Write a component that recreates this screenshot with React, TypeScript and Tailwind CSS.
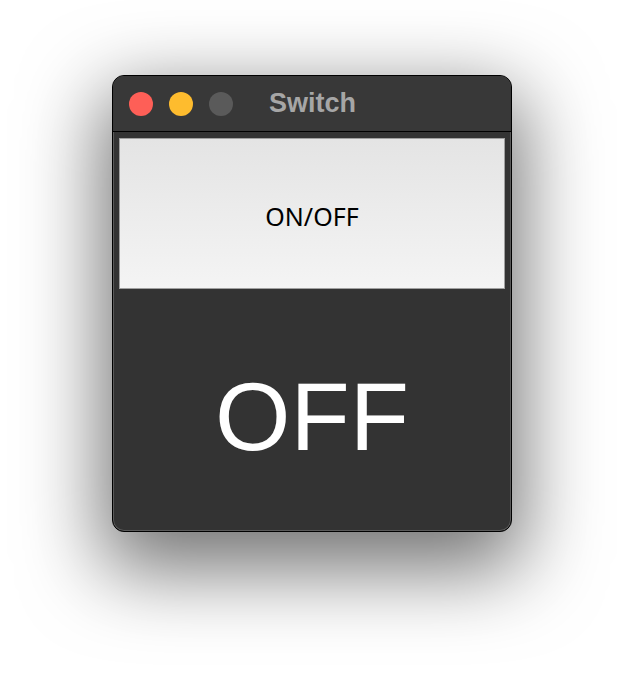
export default function App() {
  return (
    <div className="w-[624px] h-[680px] bg-white pt-[75px] pl-[112px] font-['Liberation_Sans',Arial,sans-serif]">
      {/* window */}
      <div className="w-[400px] h-[457px] rounded-[12px] border border-black bg-[#333333] shadow-[0_28px_80px_10px_rgba(0,0,0,0.55)] ring-1 ring-inset ring-[#5a5a5a] flex flex-col overflow-hidden">
        {/* title bar */}
        <div className="h-[56px] shrink-0 bg-[#383838] border-b border-black flex items-center relative">
          <div className="flex items-center gap-[16px] pl-[16px]">
            <span className="w-[24px] h-[24px] rounded-full bg-[#fe5f57]" />
            <span className="w-[24px] h-[24px] rounded-full bg-[#febc2e]" />
            <span className="w-[24px] h-[24px] rounded-full bg-[#5a5a5a]" />
          </div>
          <span className="ml-[36px] text-[27px] font-bold text-[#a6a6a6] leading-none">Switch</span>
        </div>
        {/* content */}
        <div className="flex-1 flex flex-col px-[6px] pt-[6px]">
          <button className="h-[151px] w-full border border-[#a0a0a0] bg-gradient-to-b from-[#e4e4e4] to-[#f4f4f4] text-black text-[25px] pt-[6px] font-['Noto_Sans',sans-serif]">
            ON/OFF
          </button>
          <div className="flex-1 flex items-center justify-center text-white text-[97px] leading-none pt-[12px]">
            OFF
          </div>
        </div>
      </div>
    </div>
  );
}
